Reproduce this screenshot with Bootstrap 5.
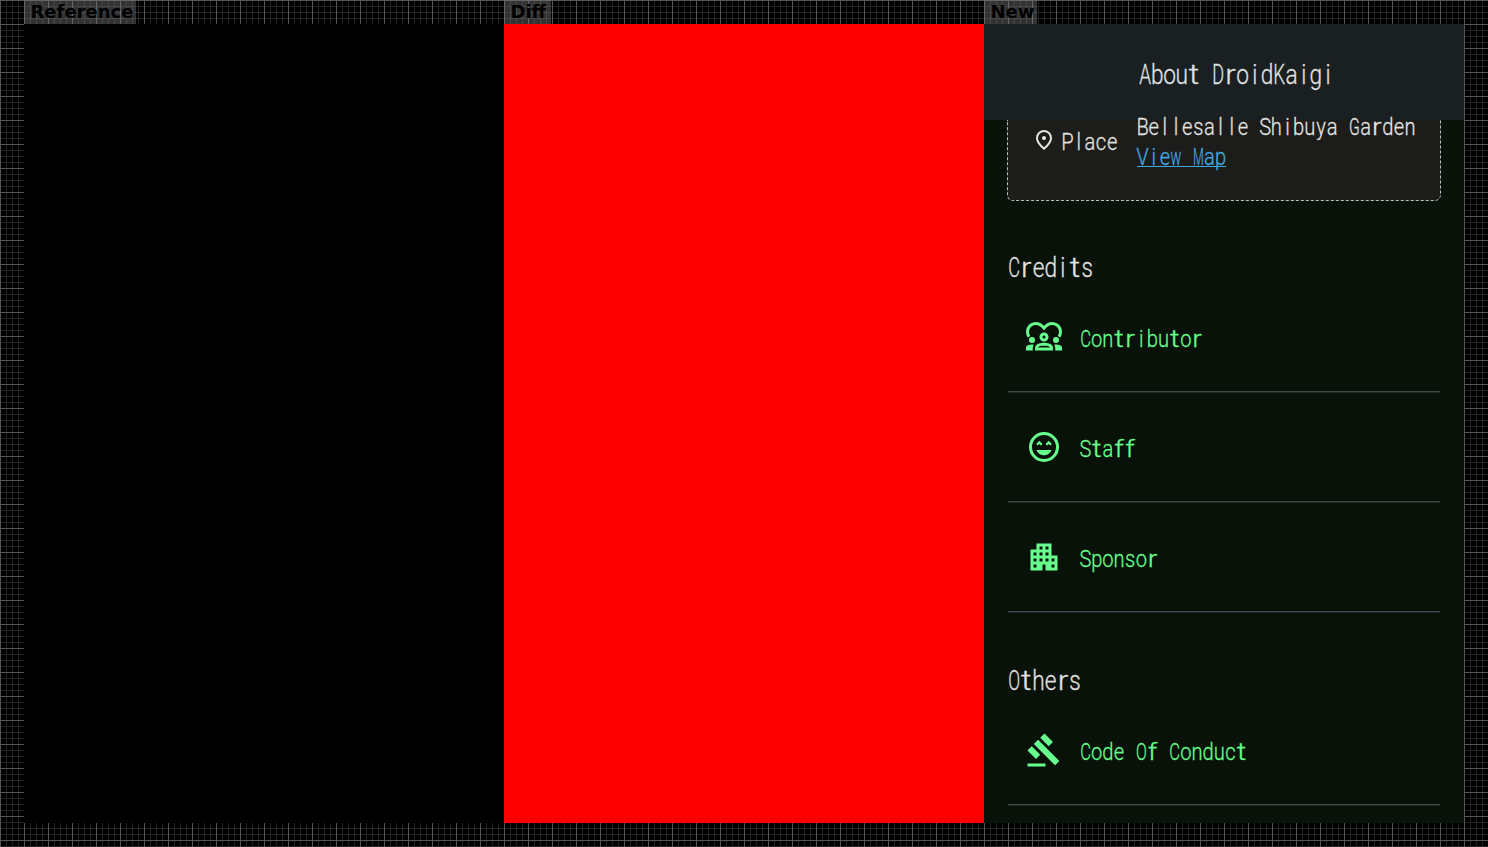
<!DOCTYPE html>
<html lang="en">
<head>
<meta charset="utf-8">
<title>Screenshot comparison</title>
<link href="https://cdn.jsdelivr.net/npm/bootstrap@5.3.0/dist/css/bootstrap.min.css" rel="stylesheet">
<style>
body{width:1488px;height:847px;overflow:hidden;padding:0 24px;font-family:"DejaVu Sans",sans-serif;background-color:#000;
background-image:linear-gradient(#555 1px,transparent 1px),linear-gradient(90deg,#555 1px,transparent 1px),linear-gradient(#222 1px,transparent 1px),linear-gradient(90deg,#222 1px,transparent 1px);
background-size:24px 24px,24px 24px,6px 6px,6px 6px}
.pane{width:480px}
.pane-label{height:24px;line-height:24px;padding-left:6.5px;background:rgba(128,128,128,.4);color:#000;font-weight:700;font-size:18px;white-space:nowrap}
.shot{height:799px;overflow:hidden}
.phone{background:#081208;color:#e3e3e0}
.topbar{height:96px;background:#1a2022;color:#e1e3e3;padding:29px 0 0 155px}
.scroller{padding:0 24px 0 23px}
.place-card{height:81px;margin-right:-1px;border:1px dashed #b9c0b9;border-top:0;border-radius:0 0 6px 6px;background:#1c1d1b;padding-left:24px}
.place-card .pin{margin-top:8px}
.place-name{margin-left:5.5px;margin-top:6px}
.venue{margin-left:19.5px;margin-top:-9px}
.map-link{color:#44a8e0;margin-top:6px;position:relative}
.map-link::after{content:"";position:absolute;left:0;top:25px;width:89px;height:1px;background:#44a8e0}
.section-title{height:82px;padding:45px 0 0 1px}
.section-title.later{height:83px;padding-top:46px}
.entry{height:110px;margin-left:1px;border-bottom:1px solid #1f2825;color:#67ff8d;box-shadow:inset 0 -1px #3f484a;padding:0 0 1px 18px}
.entry .cells{margin-left:17.5px;margin-top:-4px}
.cells{display:block;overflow:visible;flex:none}
.cells text{font-family:Roboto,sans-serif;font-weight:300;fill:currentColor;stroke:currentColor;stroke-width:.25;text-anchor:middle;white-space:pre}
.glyph{fill:currentColor;flex:none;display:block}
</style>
</head>
<body>
<main class="d-flex">
<section class="pane"><div class="pane-label" style="width:112px">Reference</div><div class="shot bg-black"></div></section>
<section class="pane"><div class="pane-label" style="width:47px">Diff</div><div class="shot" style="background:#f00"></div></section>
<section class="pane"><div class="pane-label" style="width:53px">New</div>
<div class="shot phone">
<header class="topbar"><svg class="cells" data-size="27" data-pitch="12.2"><text>About DroidKaigi</text></svg></header>
<div class="scroller">
<div class="place-card d-flex align-items-start">
<svg class="glyph pin" width="24" height="24" viewBox="0 -960 960 960"><path d="M480-480q33 0 56.5-23.5T560-560q0-33-23.5-56.5T480-640q-33 0-56.5 23.5T400-560q0 33 23.5 56.5T480-480Zm0 294q122-112 181-203.5T720-552q0-109-69.5-178.5T480-800q-101 0-170.5 69.5T240-552q0 71 59 162.5T480-186Zm0 106Q319-217 239.5-334.5T160-552q0-150 96.5-239T480-880q127 0 223.5 89T800-552q0 100-79.5 217.5T480-80Z"/></svg>
<svg class="cells place-name"><text>Place</text></svg>
<div class="venue"><svg class="cells"><text>Bellesalle Shibuya Garden</text></svg><div class="map-link"><svg class="cells"><text>View Map</text></svg></div></div>
</div>
<div class="section-title"><svg class="cells" data-size="27" data-pitch="12.2"><text>Credits</text></svg></div>
<div class="entry d-flex align-items-center">
<svg class="glyph" width="36" height="36" viewBox="0 0 24 24"><circle cx="4" cy="14" r="2"/><circle cx="20" cy="14" r="2"/><path d="M5.13 17.1C4.76 17.04 4.39 17 4 17c-.99 0-1.93.21-2.78.58A2.01 2.01 0 0 0 0 19.43V21h4.5v-1.61c0-.83.23-1.61.63-2.29zM18.87 17.1c.37-.06.74-.1 1.13-.1.99 0 1.93.21 2.78.58A2.01 2.01 0 0 1 24 19.43V21h-4.5v-1.61c0-.83-.23-1.61-.63-2.29z"/><path fill-rule="evenodd" d="M16.24 16.65c-1.17-.52-2.61-.9-4.24-.9s-3.07.39-4.24.9A2.99 2.99 0 0 0 6 19.39V21h12v-1.61c0-1.18-.68-2.26-1.76-2.74zM8.07 19c.19-.45.27-.53 1.3-.93.86-.23 1.73-.32 2.63-.32s1.77.09 2.63.32c1.03.4 1.1.48 1.3.93z"/><circle cx="12" cy="12" r="2" fill="none" stroke="currentColor" stroke-width="2"/><path fill="none" stroke="currentColor" stroke-width="2" d="M2 11.8C1.3 10.7 1 9.6 1 8.5 1 5.4 3.4 3 6.5 3c2.3 0 4.1 1.3 5.5 3.1C13.4 4.3 15.2 3 17.5 3 20.6 3 23 5.4 23 8.5c0 1.1-.3 2.2-1 3.3"/></svg>
<svg class="cells"><text>Contributor</text></svg></div>
<div class="entry d-flex align-items-center">
<svg class="glyph" width="36" height="36" viewBox="0 0 24 24"><circle cx="12" cy="12" r="9" fill="none" stroke="currentColor" stroke-width="2"/><path d="M13 9.94 14.06 11l1.06-1.06L16.18 11l1.06-1.06-2.12-2.12zM8.88 9.94 9.94 11 11 9.94 8.88 7.82 6.76 9.94 7.82 11zM12 17.5c2.33 0 4.31-1.46 5.11-3.5H6.89c.8 2.04 2.78 3.5 5.11 3.5z"/></svg>
<svg class="cells"><text>Staff</text></svg></div>
<div class="entry d-flex align-items-center">
<svg class="glyph" width="36" height="36" viewBox="0 0 24 24"><path d="M17 11V3H7v4H3v14h8v-4h2v4h8V11h-4zM7 19H5v-2h2v2zm0-4H5v-2h2v2zm0-4H5V9h2v2zm4 4H9v-2h2v2zm0-4H9V9h2v2zm0-4H9V5h2v2zm4 8h-2v-2h2v2zm0-4h-2V9h2v2zm0-4h-2V5h2v2zm4 12h-2v-2h2v2zm0-4h-2v-2h2v2z"/></svg>
<svg class="cells"><text>Sponsor</text></svg></div>
<div class="section-title later"><svg class="cells" data-size="27" data-pitch="12.2"><text>Others</text></svg></div>
<div class="entry d-flex align-items-center">
<svg class="glyph" width="36" height="36" viewBox="0 0 24 24"><path d="M1 21h12v2H1zM5.245 8.07l2.83-2.827 14.14 14.142-2.828 2.828zM12.317 1l5.657 5.656-2.83 2.83-5.654-5.66zM3.825 9.485l5.657 5.657-2.828 2.828-5.657-5.657z"/></svg>
<svg class="cells"><text>Code Of Conduct</text></svg></div>
</div>
</div>
</section>
</main>
<script>
// Sets each line in equal-width character cells; wide and narrow letters are fitted to theirs.
document.querySelectorAll('.cells').forEach(svg => {
  const size = +(svg.dataset.size || 24), pitch = +(svg.dataset.pitch || 11.15), squeeze = .84;
  const text = svg.firstElementChild, n = text.textContent.length;
  svg.setAttribute('width', n * pitch);
  svg.setAttribute('height', 24);
  text.setAttribute('font-size', size);
  text.setAttribute('transform', `scale(${squeeze} 1)`);
  text.setAttribute('y', size > 24 ? 31.5 : 24);
  text.setAttribute('x', Array.from({length: n}, (_, i) => ((i + .5) * pitch / squeeze).toFixed(2)).join(' '));
  text.innerHTML = text.textContent.replace(/[MwADCOKGtrf]/g, c =>
    `<tspan textLength="${(pitch * (/[trf]/.test(c) ? .86 : .97) / squeeze).toFixed(2)}" lengthAdjust="spacingAndGlyphs">${c}</tspan>`);
});
</script>
<script src="https://cdn.jsdelivr.net/npm/bootstrap@5.3.0/dist/js/bootstrap.bundle.min.js"></script>
</body>
</html>
